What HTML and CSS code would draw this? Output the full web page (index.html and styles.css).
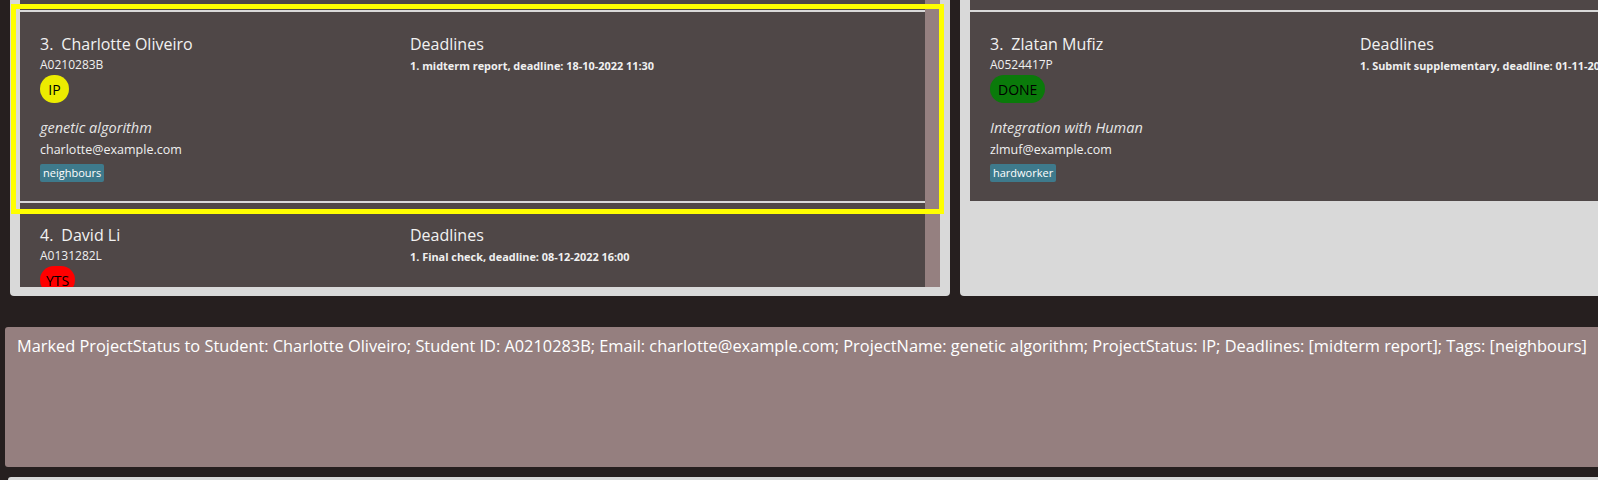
FILE: index.html
```html
<!DOCTYPE html>
<html>
<head>
<meta charset="utf-8">
<link rel="stylesheet" href="styles.css">
</head>
<body>
<div class="lists">
  <div class="panel panel-left">
    <div class="list">
      <div class="cells">
        <div class="cell-prev"></div>
        <div class="cell">
          <div class="info">
            <div class="name"><span class="idx">3.</span>Charlotte Oliveiro</div>
            <div class="sid">A0210283B</div>
            <div class="status status-ip">IP</div>
            <div class="project">genetic algorithm</div>
            <div class="email">charlotte@example.com</div>
            <div class="tags"><span class="tag">neighbours</span></div>
          </div>
          <div class="deadlines">
            <div class="dl-title">Deadlines</div>
            <div class="dl-item">1. midterm report, deadline: 18-10-2022 11:30</div>
          </div>
        </div>
        <div class="cell">
          <div class="info">
            <div class="name"><span class="idx">4.</span>David Li</div>
            <div class="sid">A0131282L</div>
            <div class="status status-yts">YTS</div>
          </div>
          <div class="deadlines">
            <div class="dl-title">Deadlines</div>
            <div class="dl-item">1. Final check, deadline: 08-12-2022 16:00</div>
          </div>
        </div>
      </div>
      <div class="scrollbar"></div>
    </div>
    <div class="focus-ring"></div>
  </div>
  <div class="panel panel-right">
    <div class="list">
      <div class="cells">
        <div class="cell-prev"></div>
        <div class="cell">
          <div class="info">
            <div class="name"><span class="idx">3.</span>Zlatan Mufiz</div>
            <div class="sid">A0524417P</div>
            <div class="status status-done">DONE</div>
            <div class="project">Integration with Human</div>
            <div class="email">zlmuf@example.com</div>
            <div class="tags"><span class="tag">hardworker</span></div>
          </div>
          <div class="deadlines">
            <div class="dl-title">Deadlines</div>
            <div class="dl-item">1. Submit supplementary, deadline: 01-11-2022 23:59</div>
          </div>
        </div>
      </div>
    </div>
  </div>
</div>
<div class="result">Marked ProjectStatus to Student: Charlotte Oliveiro; Student ID: A0210283B; Email: charlotte@example.com; ProjectName: genetic algorithm; ProjectStatus: IP; Deadlines: [midterm report]; Tags: [neighbours]</div>
<div class="command"></div>
</body>
</html>
```

FILE: styles.css
```css
* { box-sizing: border-box; }
html, body { margin: 0; padding: 0; }
body {
  width: 1598px;
  height: 480px;
  overflow: hidden;
  background: #261f1f;
  font-family: "Open Sans", "Noto Sans", sans-serif;
  color: #ffffff;
}
.lists {
  display: flex;
  gap: 10px;
  padding-left: 10px;
  height: 296px;
}
.panel {
  background: #d9d9d9;
  border-radius: 0 0 4px 4px;
  padding: 0 10px 9px 10px;
  position: relative;
  flex: none;
}
.panel-left { width: 940px; }
.panel-right { width: 700px; padding-right: 0; }
.list { display: flex; height: 287px; }
.cells { flex: 1; overflow: hidden; display: flex; flex-direction: column; }
.scrollbar { width: 15px; background: #958080; flex: none; }
.cell-prev { height: 10px; background: #4f4747; flex: none; }
.cell {
  height: 191px;
  flex: none;
  background: #4f4747;
  border-top: 2px solid #d9d9d9;
  padding: 22px 20px 0 20px;
  display: grid;
  grid-template-columns: 370px 1fr;
  align-items: start;
  overflow: hidden;
}
.info, .deadlines { display: flex; flex-direction: column; align-items: flex-start; min-width: 0; }
.name { font-size: 16px; line-height: 20px; color: #f2f2f2; white-space: nowrap; }
.idx { margin-right: 8px; }
.sid { font-size: 12px; line-height: 16px; margin-top: 3px; color: #f0f0f0; }
.status {
  margin-top: 2px;
  height: 28px;
  min-width: 29px;
  border-radius: 14px;
  padding: 0 6px;
  display: flex;
  align-items: center;
  justify-content: center;
  color: #000;
  font-size: 14px;
}
.status-ip { background: #ecec00; }
.status-yts { background: #ff0000; }
.status-done { background: #0a7a0a; padding: 0 8px; }
.project { font-size: 14.5px; line-height: 18px; font-style: italic; margin-top: 16px; color: #e6e6e6; white-space: nowrap; }
.email { font-size: 12.5px; line-height: 17px; margin-top: 4px; color: #f0f0f0; }
.tags { margin-top: 6px; display: flex; gap: 4px; }
.tag {
  background: #3e7a8c;
  color: #ffffff;
  font-size: 11px;
  line-height: 18px;
  height: 18px;
  padding: 0 3px;
  border-radius: 2px;
}
.dl-title { font-size: 16px; line-height: 20px; color: #f2f2f2; }
.dl-item { font-size: 10.9px; line-height: 14px; font-weight: bold; margin-top: 5px; color: #f0f0f0; white-space: nowrap; }
.focus-ring {
  position: absolute;
  left: 1px;
  top: 4px;
  width: 933px;
  height: 210px;
  border: 5px solid #ffff00;
  pointer-events: none;
}
.result {
  margin: 31px 0 0 5px;
  width: 1610px;
  height: 140px;
  background: #957f7f;
  border-radius: 3px;
  padding: 9px 12px 8px;
  font-size: 16.35px;
  line-height: 20px;
  color: #ffffff;
  white-space: nowrap;
}
.command {
  margin: 10px 0 0 8px;
  height: 3px;
  width: 1620px;
  background: #d9d9d9;
  border-radius: 3px 3px 0 0;
}
```
